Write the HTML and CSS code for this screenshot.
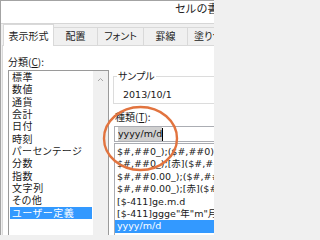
FILE: index.html
```html
<!DOCTYPE html>
<html lang="ja">
<head>
<meta charset="utf-8">
<title>セルの書式設定</title>
<link rel="stylesheet" href="styles.css">
</head>
<body>
<div class="window">
  <div class="titlebar"><span class="title">セルの書式設定</span></div>
  <div class="tabs">
    <div class="tab active tab-w50">表示形式</div>
    <div class="tab tab-w45">配置</div>
    <div class="tab tab-w47">フォント</div>
    <div class="tab tab-w45">罫線</div>
    <div class="tab tab-w60">塗りつぶし</div>
  </div>
  <div class="page">
    <div class="left">
      <div class="label">分類(<u>C</u>):</div>
      <div class="listbox">
        <ul class="items">
          <li>標準</li>
          <li>数値</li>
          <li>通貨</li>
          <li>会計</li>
          <li>日付</li>
          <li>時刻</li>
          <li>パーセンテージ</li>
          <li>分数</li>
          <li>指数</li>
          <li>文字列</li>
          <li>その他</li>
          <li class="selected">ユーザー定義</li>
        </ul>
        <div class="scrollbar">
          <svg class="arrow" width="15" height="14" viewBox="0 0 15 14"><polyline points="5,10 7.5,7.5 10,10" fill="none" stroke="#a6a6a6" stroke-width="1"/></svg>
        </div>
      </div>
    </div>
    <div class="right">
      <fieldset class="sample">
        <legend>サンプル</legend>
        <div class="sample-value">2013/10/1</div>
      </fieldset>
      <div class="label label-type">種類(<u>T</u>):</div>
      <div class="input"><span class="sel">yyyy/m/d</span><span class="caret"></span></div>
      <ul class="typelist">
        <li>$#,##0_);($#,##0)</li>
        <li>$#,##0_);[赤]($#,##0)</li>
        <li>$#,##0.00_);($#,##0.00)</li>
        <li>$#,##0.00_);[赤]($#,##0.00)</li>
        <li>[$-411]ge.m.d</li>
        <li>[$-411]ggge"年"m"月"d"日"</li>
        <li class="selected">yyyy/m/d</li>
      </ul>
    </div>
  </div>
  <svg class="annotation" width="214" height="235" viewBox="0 0 214 235"><ellipse cx="140.5" cy="138.5" rx="36.5" ry="31.5" fill="none" stroke="#e2743f" stroke-width="2.4"/></svg>
</div>
</body>
</html>
```
FILE: styles.css
```css
html, body {
  margin: 0;
  padding: 0;
}
body {
  width: 214px;
  height: 235px;
  overflow: hidden;
  font-family: "Noto Sans CJK JP", "Noto Sans", sans-serif;
  font-size: 10px;
  color: #1a1a1a;
  font-feature-settings: "palt";
  background: #f0f0f0;
}
.window {
  position: relative;
  height: 235px;
  box-sizing: border-box;
  border-top: 1px solid #a3a3a3;
  border-left: 1px solid #a3a3a3;
  background: #f0f0f0;
  overflow: hidden;
}
.titlebar {
  height: 22px;
  background: #fff;
  border-bottom: 1px solid #d6d6d6;
  white-space: nowrap;
  overflow: hidden;
}
.title {
  display: block;
  padding-left: 174px;
  font-size: 11px;
  line-height: 14px;
  letter-spacing: 0.4px;
  color: #222;
}
.tabs {
  display: flex;
  align-items: flex-end;
  height: 21px;
  padding-left: 2px;
  white-space: nowrap;
}
.tab {
  flex: none;
  box-sizing: border-box;
  height: 18px;
  border: 1px solid #d9d9d9;
  border-bottom: 0;
  margin-right: -1px;
  background: #f0f0f0;
  text-align: center;
  line-height: 16px;
  color: #222;
}
.tab.active {
  position: relative;
  z-index: 1;
  height: 22px;
  margin-bottom: -1px;
  padding-top: 3px;
  background: #fff;
}
.tab-w50 { width: 51px; }
.tab-w45 { width: 45px; }
.tab-w47 { width: 47px; }
.tab-w60 { width: 60px; }
.page {
  display: flex;
  gap: 4px;
  height: 200px;
  margin-left: 1px;
  padding-left: 5px;
  background: #fff;
  border-top: 1px solid #d9d9d9;
  border-left: 1px solid #d9d9d9;
}
.label {
  height: 12px;
  line-height: 12px;
  white-space: nowrap;
  color: #1a1a1a;
}
.left {
  flex: none;
  width: 101px;
  display: flex;
  flex-direction: column;
}
.left .label {
  margin-top: 10px;
}
.listbox {
  display: flex;
  margin-top: 2px;
  height: 200px;
  border: 1px solid #9a9a9a;
}
.items {
  list-style: none;
  margin: 0;
  padding: 0 1px;
  width: 84px;
  box-sizing: border-box;
}
.items li {
  height: 12.35px;
  line-height: 12.35px;
  padding-left: 2px;
  letter-spacing: 0.6px;
  white-space: nowrap;
}
.items li.selected,
.typelist li.selected {
  background: #3399ff;
  color: #fff;
}
.scrollbar {
  width: 15px;
  background: #f0f0f0;
}
.arrow {
  display: block;
}
.right {
  flex: none;
  width: 140px;
  display: flex;
  flex-direction: column;
  padding-top: 24px;
}
.sample {
  margin: 0;
  min-width: 0;
  padding: 7px 0 2px 3px;
  border: 1px solid #dcdcdc;
  border-right: 0;
}
.sample legend {
  padding: 0 1px;
  line-height: 12px;
  color: #1a1a1a;
}
.sample-value {
  margin-left: 6px;
  line-height: 12px;
  font-family: "DejaVu Sans", "Noto Sans CJK JP", sans-serif;
  font-size: 9.5px;
  color: #1a1a1a;
}
.label-type {
  margin-top: 7px;
  padding-left: 2px;
}
.input {
  display: flex;
  align-items: center;
  box-sizing: border-box;
  height: 17px;
  margin-top: 3px;
  margin-left: 1px;
  padding-left: 3px;
  border: 1px solid #abadb3;
  border-right: 0;
  font-family: "DejaVu Sans", "Noto Sans CJK JP", sans-serif;
  font-size: 9.5px;
}
.sel {
  background: #d0d0d0;
  line-height: 14px;
  color: #111;
}
.caret {
  width: 1px;
  height: 13px;
  background: #000;
}
.typelist {
  list-style: none;
  margin: 1px 0 0 1px;
  padding: 2px 0 0 0;
  height: 120px;
  border: 1px solid #abadb3;
  border-right: 0;
  font-family: "DejaVu Sans", "Noto Sans CJK JP", sans-serif;
  font-size: 9.5px;
}
.typelist li {
  height: 12.4px;
  line-height: 12.4px;
  padding-left: 2px;
  white-space: nowrap;
}
.annotation {
  position: absolute;
  left: -1px;
  top: -1px;
  pointer-events: none;
}
```
